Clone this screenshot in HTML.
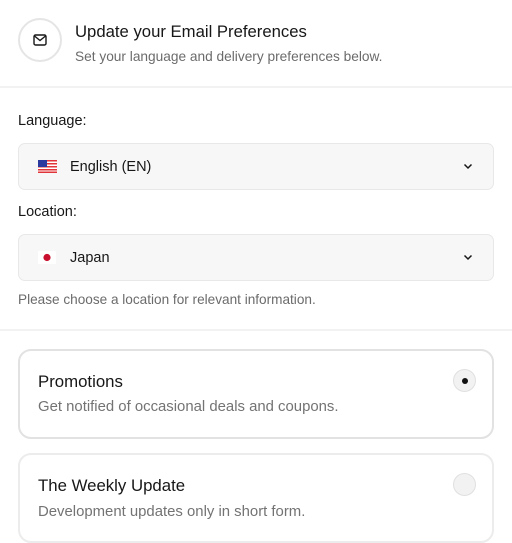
<!DOCTYPE html>
<html><head><style>
*{box-sizing:border-box;margin:0;padding:0}
body{width:512px;height:512px;overflow:hidden;background:#fff;font-family:"Liberation Sans",sans-serif;color:#171717;position:relative}
.a{position:absolute;white-space:nowrap}
.sel{position:absolute;left:18px;width:476px;height:47px;background:#f7f7f7;border:1px solid #e8e8e8;border-radius:7px}
.sel span{position:absolute;left:51px;top:15px;font-size:14.5px}
.card{position:absolute;left:18px;width:476px;border:2px solid #e2e2e2;border-radius:13px;background:#fff}
.card .t{position:absolute;left:18px;top:21px;font-size:16.8px;white-space:nowrap}
.card .d{position:absolute;left:18px;top:48px;font-size:14.9px;color:#737373;white-space:nowrap}
.rad{position:absolute;left:433px;top:18px;width:23px;height:23px;border-radius:50%;background:#f2f2f2;border:1px solid #e0e0e0}
</style></head><body>
<div class="a" style="left:18px;top:18px;width:44px;height:44px;border:2px solid #e5e5e5;border-radius:50%"></div>
<svg class="a" style="left:33px;top:34px" width="14" height="12" viewBox="0 0 14 12"><rect x="1" y="1" width="12" height="10" rx="1.5" fill="none" stroke="#171717" stroke-width="1.4"/><path d="M1.5 2l5.5 4.5 5.5-4.5" fill="none" stroke="#171717" stroke-width="1.4"/></svg>
<div class="a" style="left:75px;top:22px;font-size:16.7px">Update your Email Preferences</div>
<div class="a" style="left:75px;top:49px;font-size:13.7px;color:#6b6b6b">Set your language and delivery preferences below.</div>
<div class="a" style="left:0;top:86px;width:512px;height:2px;background:#f2f2f2"></div>
<div class="a" style="left:18px;top:113px;font-size:14.5px">Language:</div>
<div class="sel" style="top:143px">
<svg class="a" style="left:19px;top:16px" width="19" height="13" viewBox="0 0 19 13"><rect width="19" height="13" fill="#fff"/><g fill="#e0343a"><rect y="0" width="19" height="1.5"/><rect y="3" width="19" height="1.5"/><rect y="6" width="19" height="1.5"/><rect y="9" width="19" height="1.5"/><rect y="11.5" width="19" height="1.5"/></g><rect width="9" height="7" fill="#2b3a9e"/></svg>
<span>English (EN)</span>
<svg class="a" style="left:444px;top:19px" width="10" height="7" viewBox="0 0 10 7"><path d="M1.5 1.5l3.5 3.5 3.5-3.5" fill="none" stroke="#171717" stroke-width="1.5"/></svg>
</div>
<div class="a" style="left:18px;top:204px;font-size:14.5px">Location:</div>
<div class="sel" style="top:234px">
<svg class="a" style="left:19px;top:16px" width="18" height="13" viewBox="0 0 18 13"><rect width="18" height="13" fill="#fff"/><circle cx="9" cy="6.5" r="3.6" fill="#c8102e"/></svg>
<span>Japan</span>
<svg class="a" style="left:444px;top:19px" width="10" height="7" viewBox="0 0 10 7"><path d="M1.5 1.5l3.5 3.5 3.5-3.5" fill="none" stroke="#171717" stroke-width="1.5"/></svg>
</div>
<div class="a" style="left:18px;top:292px;font-size:13.6px;color:#6b6b6b">Please choose a location for relevant information.</div>
<div class="a" style="left:0;top:329px;width:512px;height:2px;background:#f2f2f2"></div>
<div class="card" style="top:349px;height:90px"><div class="t">Promotions</div><div class="d">Get notified of occasional deals and coupons.</div><div class="rad" style="top:18px"><div class="a" style="left:8px;top:8px;width:6px;height:6px;border-radius:50%;background:#111"></div></div></div>
<div class="card" style="top:453px;height:90px;border-color:#ececec"><div class="t">The Weekly Update</div><div class="d" style="top:49px">Development updates only in short form.</div><div class="rad"></div></div>
</body></html>
